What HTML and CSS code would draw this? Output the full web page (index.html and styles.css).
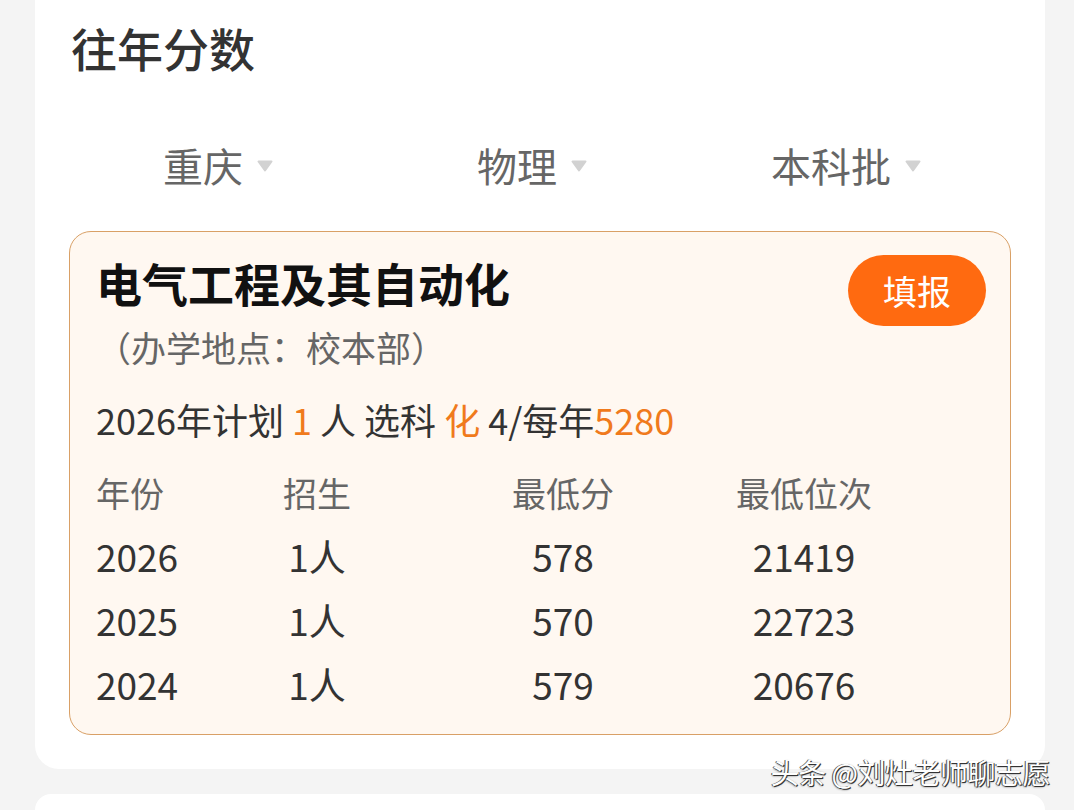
FILE: index.html
```html
<!DOCTYPE html>
<html lang="zh-CN">
<head>
  <meta charset="UTF-8" />
  <meta name="viewport" content="width=device-width, initial-scale=1.0" />
  <title>往年分数</title>
  <link rel="stylesheet" href="styles.css">
</head>
<body>

  <div class="page">
    <section class="panel">
      <h2 class="panel-title">往年分数</h2>

      <div class="filters">
        <div class="filter">重庆 <svg class="caret" viewBox="0 0 16 12"><path d="M1.5 1.5 H14.5 L8 10.5 Z" /></svg></div>
        <div class="filter">物理 <svg class="caret" viewBox="0 0 16 12"><path d="M1.5 1.5 H14.5 L8 10.5 Z" /></svg></div>
        <div class="filter">本科批 <svg class="caret" viewBox="0 0 16 12"><path d="M1.5 1.5 H14.5 L8 10.5 Z" /></svg></div>
      </div>

      <div class="major-card">
        <div class="major-head">
          <div class="major-name">电气工程及其自动化</div>
          <button class="apply-btn">填报</button>
        </div>
        <div class="major-place">（办学地点：校本部）</div>
        <div class="major-plan">
          2026年计划 <span class="hl">1</span> 人 选科 <span class="hl">化</span> 4/每年<span class="hl">5280</span>
        </div>

        <div class="score-table">
          <div class="cell th">年份</div>
          <div class="cell th">招生</div>
          <div class="cell th">最低分</div>
          <div class="cell th">最低位次</div>

          <div class="cell">2026</div>
          <div class="cell num">1人</div>
          <div class="cell num">578</div>
          <div class="cell num">21419</div>

          <div class="cell">2025</div>
          <div class="cell num">1人</div>
          <div class="cell num">570</div>
          <div class="cell num">22723</div>

          <div class="cell">2024</div>
          <div class="cell num">1人</div>
          <div class="cell num">579</div>
          <div class="cell num">20676</div>
        </div>
      </div>
    </section>

    <section class="panel next"></section>
  </div>

  <div class="watermark">头条 @刘灶老师聊志愿</div>

</body>
</html>
```

FILE: styles.css
```css
:root {
  --orange: #ff6a10;
  --orange-text: #f07a1c;
  --card-border: #d9a066;
  --card-bg: #fff8f1;
}

html, body {
  margin: 0;
  padding: 0;
  height: 100%;
}

body {
  background: #f4f4f4;
  font-family: "Noto Sans CJK SC", "Noto Sans", sans-serif;
  color: #333;
  overflow: hidden;
  position: relative;
}

.page {
  padding: 0 29px 0 35px;
}

.panel {
  background: #fff;
  border-radius: 0 0 24px 24px;
  padding: 20px 34px 34px;
}

/* 下一块卡片只露出顶边 */
.panel.next {
  margin-top: 25px;
  border-radius: 24px 24px 0 0;
  height: 16px;
  padding: 0;
}

.panel-title {
  margin: 0;
  font-size: 46px;
  line-height: 54px;
  font-weight: 500;
  color: #333;
  padding-left: 2px;
}

/* 省份 / 科目 / 批次 */
.filters {
  display: flex;
  height: 60px;
  margin: 60px 8px 37px -8px;
}

.filter {
  flex: 1;
  display: flex;
  justify-content: center;
  align-items: center;
  font-size: 40px;
  color: #666;
  margin-top: 2px;
}

.caret {
  width: 16px;
  height: 12px;
  margin-left: 14px;
  margin-top: 2px;
  fill: #d2d2d2;
  stroke: #d2d2d2;
  stroke-width: 2;
  stroke-linejoin: round;
}

.major-card {
  background: var(--card-bg);
  border: 1.5px solid var(--card-border);
  border-radius: 22px;
  padding: 22px 24px 15px 26px;
}

.major-head {
  display: flex;
  justify-content: space-between;
  align-items: flex-start;
}

.major-name {
  font-size: 46px;
  line-height: 56px;
  font-weight: 700;
  color: #111;
}

.apply-btn {
  margin: 1px 0 -16px;
  width: 138px;
  height: 71px;
  border: none;
  border-radius: 36px;
  background: var(--orange);
  color: #fff;
  font-family: inherit;
  font-size: 34px;
  cursor: pointer;
}

.major-place {
  margin-top: 15px;
  font-size: 35px;
  line-height: 44px;
  color: #666;
}

.major-plan {
  margin-top: 27px;
  font-size: 36px;
  line-height: 46px;
  color: #333;
}

.hl {
  color: var(--orange-text);
}

.score-table {
  margin-top: 21px;
  display: grid;
  grid-template-columns: 145px 152px 340px 142px;
  grid-auto-rows: 64px;
  align-items: center;
}

.cell {
  font-size: 37px;
  color: #333;
  margin-top: -6px;
}

.cell.num {
  text-align: center;
}

.cell.th {
  font-size: 34px;
  color: #666;
}

.cell.th:nth-child(n+2) {
  text-align: center;
}

.watermark {
  position: absolute;
  right: 24px;
  bottom: 22px;
  font-size: 28px;
  line-height: 32px;
  color: #fff;
  letter-spacing: -0.5px;
  text-shadow: 1px 1px 0 #333, -1px 0 0 #555, 0 1px 2px rgba(0, 0, 0, 0.6);
}
```
